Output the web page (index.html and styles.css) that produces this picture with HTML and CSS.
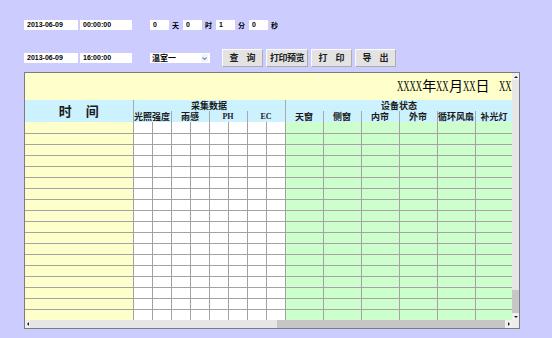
FILE: index.html
```html
<!DOCTYPE html>
<html lang="zh-CN">
<head>
  <meta charset="UTF-8" />
  <title>历史数据查询</title>
  <link rel="stylesheet" href="styles.css">
</head>
<body>

  <!-- 查询条件 -->
  <div class="toolbar">
    <div class="row">
      <input class="field date" value="2013-06-09">
      <input class="field time" value="00:00:00">
      <div class="span-group">
        <input class="field num" value="0"><label>天</label>
        <input class="field num" value="0"><label>时</label>
        <input class="field num" value="1"><label>分</label>
        <input class="field num" value="0"><label>秒</label>
      </div>
    </div>
    <div class="row row-query">
      <input class="field date" value="2013-06-09">
      <input class="field time" value="16:00:00">
      <div class="combo">
        <span class="combo-value">温室一</span>
        <span class="combo-arrow">
          <svg width="7" height="7" viewBox="0 0 7 7"><path d="M1.5 2.5 L3.5 4.5 L5.5 2.5" fill="none" stroke="#7d8fb8" stroke-width="1.2"/></svg>
        </span>
      </div>
      <div class="buttons">
        <button class="btn wide">查 询</button>
        <button class="btn b-preview">打印预览</button>
        <button class="btn wide">打 印</button>
        <button class="btn wide">导 出</button>
      </div>
    </div>
  </div>

  <!-- 报表 -->
  <div class="report">
    <div class="sheet">
      <div class="sheet-title"><span class="x x4">XXXX</span>年<span class="x x2">XX</span>月<span class="x x2">XX</span>日<span class="gap"></span><span class="x x2">XX</span></div>
      <table class="grid">
        <colgroup>
          <col class="w-time">
          <col class="w-data"><col class="w-data"><col class="w-data"><col class="w-data">
          <col class="w-data"><col class="w-data"><col class="w-data"><col class="w-data">
          <col class="w-dev"><col class="w-dev"><col class="w-dev">
          <col class="w-dev"><col class="w-dev"><col class="w-dev">
        </colgroup>
        <thead>
          <tr>
            <th rowspan="2" class="h-time">时 间</th>
            <th colspan="8">采集数据</th>
            <th colspan="6">设备状态</th>
          </tr>
          <tr>
            <th colspan="2">光照强度</th>
            <th colspan="2">雨感</th>
            <th colspan="2" class="latin">PH</th>
            <th colspan="2" class="latin">EC</th>
            <th>天窗</th>
            <th>侧窗</th>
            <th>内帘</th>
            <th>外帘</th>
            <th>循环风扇</th>
            <th>补光灯</th>
          </tr>
        </thead>
        <tbody id="rows"></tbody>
      </table>
    </div>

    <div class="vscroll">
      <span class="sb-btn"><i class="tri tri-up"></i></span>
      <span class="sb-thumb"></span>
      <span class="sb-track"></span>
      <span class="sb-btn"><i class="tri tri-down"></i></span>
    </div>
    <div class="hscroll">
      <span class="sb-btn sb-left"><i class="tri tri-left"></i></span>
      <span class="sb-thumb h-thumb"></span>
      <span class="sb-track"></span>
      <span class="sb-btn"><i class="tri tri-right"></i></span>
    </div>
    <div class="corner"></div>
  </div>

  <script>
    // lignes vides du tableau
    const rows = document.getElementById('rows');
    for (let i = 0; i < 19; i++) {
      let html = '<td class="c-time"></td>';
      for (let j = 0; j < 8; j++) html += '<td class="c-data"></td>';
      for (let j = 0; j < 6; j++) html += '<td class="c-dev"></td>';
      const tr = document.createElement('tr');
      tr.innerHTML = html;
      rows.appendChild(tr);
    }
  </script>

</body>
</html>
```

FILE: styles.css
```css
body {
  margin: 0;
  padding: 20px 0 0 24px;
  background: #ccccff;
  font-family: "Liberation Sans", "Noto Sans CJK SC", sans-serif;
  color: #000;
}

/* barre de recherche */
.row {
  display: flex;
  align-items: center;
  height: 10px;
}

.row-query {
  height: 18px;
  margin-top: 19px;
}

.field {
  box-sizing: border-box;
  height: 10px;
  margin: 0;
  padding: 0 0 0 3px;
  border: none;
  background: #fff;
  font: bold 7px/10px "Liberation Sans", "Noto Sans CJK SC", sans-serif;
  color: #000;
  outline: none;
}

.date { width: 54px; margin-right: 2px; }
.time { width: 52px; }
.num { width: 19px; }

.span-group {
  display: flex;
  align-items: center;
  margin-left: 18px;
}

.span-group label {
  width: 7px;
  margin: 0 4px 0 3px;
  font: bold 7px/10px "Noto Sans CJK SC", sans-serif;
}

.combo {
  display: flex;
  align-items: center;
  justify-content: space-between;
  width: 60px;
  height: 10px;
  margin-left: 18px;
  padding: 0 2px 0 2px;
  box-sizing: border-box;
  background: #fff;
}

.combo-value {
  font: bold 8px/10px "Noto Sans CJK SC", sans-serif;
  color: #000;
}

.combo-arrow {
  width: 7px;
  height: 8px;
  background: #f2f4fa;
  display: flex;
  align-items: center;
  justify-content: center;
}

.buttons {
  display: flex;
  gap: 3px;
  margin-left: 12px;
}

.btn {
  box-sizing: border-box;
  width: 41px;
  height: 18px;
  padding: 0;
  background: #e3e3e3;
  border: 1px solid;
  border-color: #fbfbfb #acacac #acacac #fbfbfb;
  font: bold 9px/16px "Noto Sans CJK SC", sans-serif;
  color: #1e1e1e;
  cursor: pointer;
}

.btn.wide { word-spacing: 6px; }
.b-preview { width: 42px; letter-spacing: -0.5px; }

/* panneau du rapport */
.report {
  display: grid;
  grid-template-columns: 487px 7px;
  grid-template-rows: 247px 8px;
  width: 494px;
  margin-top: 5px;
  border: 1px solid #7c7c7c;
  background: #fff;
}

.sheet {
  overflow: hidden;
}

.sheet-title {
  height: 27px;
  background: #ffffcc;
  text-align: right;
  white-space: nowrap;
  font: 14px/28px "Liberation Serif", "Noto Sans CJK SC", serif;
  color: #000;
}

/* X étroits comme dans l'original */
.x {
  display: inline-block;
  transform: scaleX(0.62);
  transform-origin: 0 0;
}

.x4 { margin-right: -15.4px; }
.x2 { margin-right: -7.7px; }

.gap {
  display: inline-block;
  width: 10px;
}

.grid {
  border-collapse: collapse;
  table-layout: fixed;
  width: 488px;
}

.w-time { width: 108px; }
.w-data { width: 19px; }
.w-dev { width: 38px; }

.grid tr { height: 11px; }

.grid th {
  padding: 0;
  background: #ccf2ff;
  border: 0 solid #a8a8a8;
  border-right-width: 1px;
  font: bold 9px/10px "Noto Sans CJK SC", sans-serif;
  color: #1a1a1a;
  white-space: nowrap;
  overflow: hidden;
}

.grid th.latin {
  font: bold 8px/10px "Liberation Serif", serif;
}

.grid th.h-time {
  font-size: 13px;
  line-height: 20px;
  word-spacing: 11px;
}

.grid td {
  padding: 0;
  border: 0 solid #a3a3a3;
  border-right-width: 1px;
  border-bottom-width: 1px;
  font-size: 0;
}

.c-time { background: #ffffcc; }
.c-data { background: #fff; }
.c-dev { background: #ccffcc; }

/* barres de défilement */
.vscroll {
  display: flex;
  flex-direction: column;
  background: #e4e4e4;
}

.hscroll {
  display: flex;
  background: #e4e4e4;
}

.sb-btn {
  flex: 0 0 7px;
  height: 7px;
  background: #f0f0f0;
  display: flex;
  align-items: center;
  justify-content: center;
}

.hscroll .sb-btn {
  height: 8px;
}

.sb-left { flex-basis: 5px; }

.sb-thumb {
  flex: 1;
  background: #e6e6e6;
}

.h-thumb { flex: 0 0 247px; }

.sb-track {
  flex: 0 0 23px;
  background: #c6c6c6;
}

.hscroll .sb-track { flex: 1; }

.tri {
  width: 0;
  height: 0;
  border: 2px solid transparent;
}

.tri-up { border-bottom-color: #222; border-top-width: 0; }
.tri-down { border-top-color: #222; border-bottom-width: 0; }
.tri-left { border-right-color: #222; border-left-width: 0; }
.tri-right { border-left-color: #222; border-right-width: 0; }

.corner {
  background: #ececec;
}
```
